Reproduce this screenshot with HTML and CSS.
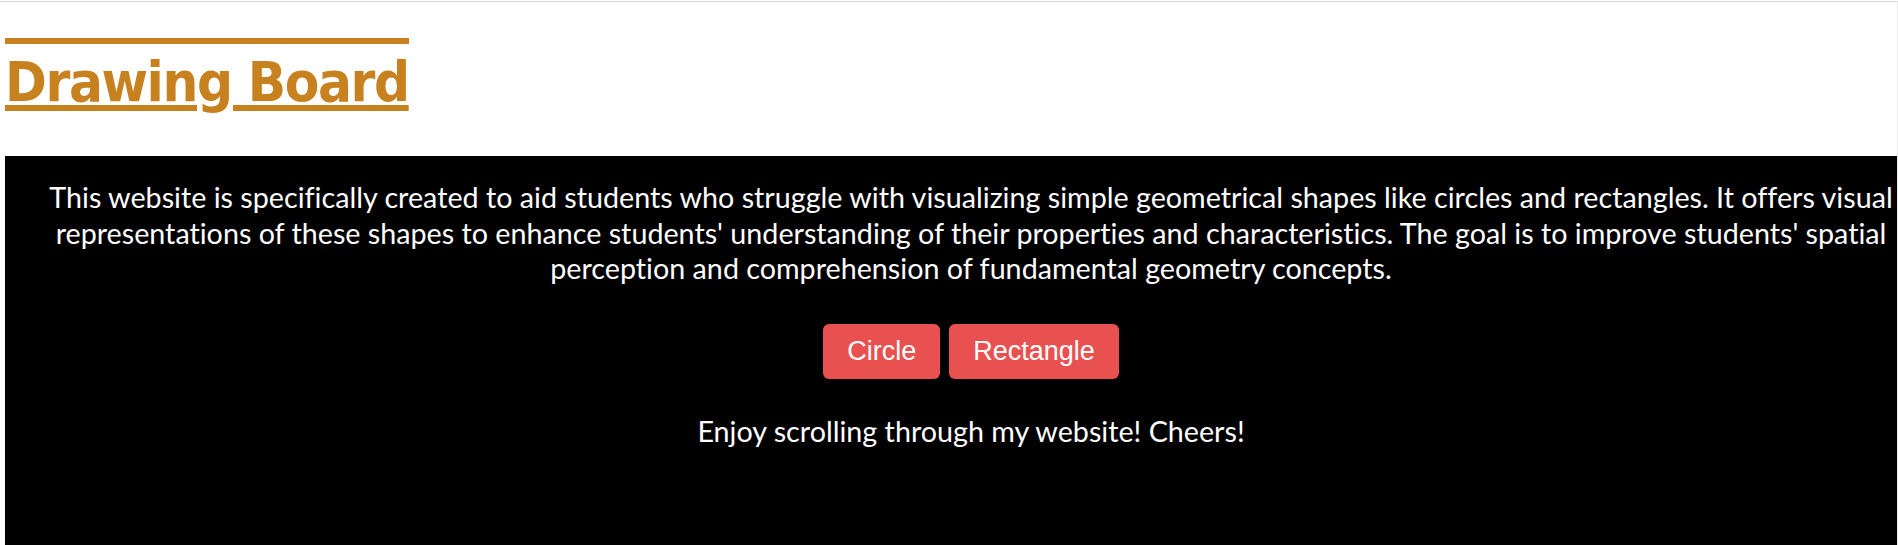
FILE: index.html
```html
<!DOCTYPE html>
<html lang="en">
<head>
<meta charset="utf-8">
<title>Drawing Board</title>
<link rel="stylesheet" href="styles.css">
</head>
<body>
<header class="top">
  <h1 class="title">Drawing Board</h1>
</header>
<main class="board">
  <p class="intro">This website is specifically created to aid students who struggle with visualizing simple geometrical shapes like circles and rectangles. It offers visual representations of these shapes to enhance students' understanding of their properties and characteristics. The goal is to improve students' spatial perception and comprehension of fundamental geometry concepts.</p>
  <div class="actions">
    <button class="btn" type="button">Circle</button>
    <button class="btn" type="button">Rectangle</button>
  </div>
  <p class="outro">Enjoy scrolling through my website! Cheers!</p>
</main>
</body>
</html>
```
FILE: styles.css
```css
html, body {
  margin: 0;
  padding: 0;
  background: #fff;
}
body {
  margin-top: 1px;
  border-top: 1px solid #d4d4d4;
  border-right: 1px solid #ececec;
  overflow: hidden;
}
.top {
  padding: 0 0 0 5px;
  height: 154px;
  box-sizing: border-box;
}
.title {
  display: inline-block;
  margin: 36px 0 0;
  padding-top: 8px;
  border-top: 6px solid #c8811f;
  font-family: "Franklin Gothic Medium", "DejaVu Sans Condensed", sans-serif;
  font-weight: bold;
  font-size: 56px;
  line-height: 60px;
  letter-spacing: -1.4px;
  color: #c8811f;
  text-decoration: underline;
  text-decoration-thickness: 6px;
  text-underline-offset: 4px;
}
.board {
  margin-left: 5px;
  padding: 24px 0 0 40px;
  min-height: 365px;
  background: #000;
  color: #fff;
  text-align: center;
}
.intro,
.outro {
  font-family: "Gill Sans", "Lato", sans-serif;
  font-size: 28.7px;
  line-height: 35.7px;
  font-variant-ligatures: none;
}
.intro {
  margin: 0;
}
.actions {
  display: flex;
  justify-content: center;
  gap: 9px;
  margin-top: 37px;
}
.btn {
  font-family: "Liberation Sans", Arial, sans-serif;
  font-size: 27px;
  line-height: 31px;
  padding: 12px 24px;
  border: none;
  border-radius: 6px;
  background: #e95151;
  color: #fff;
}
.outro {
  margin: 35px 0 0;
}
```
